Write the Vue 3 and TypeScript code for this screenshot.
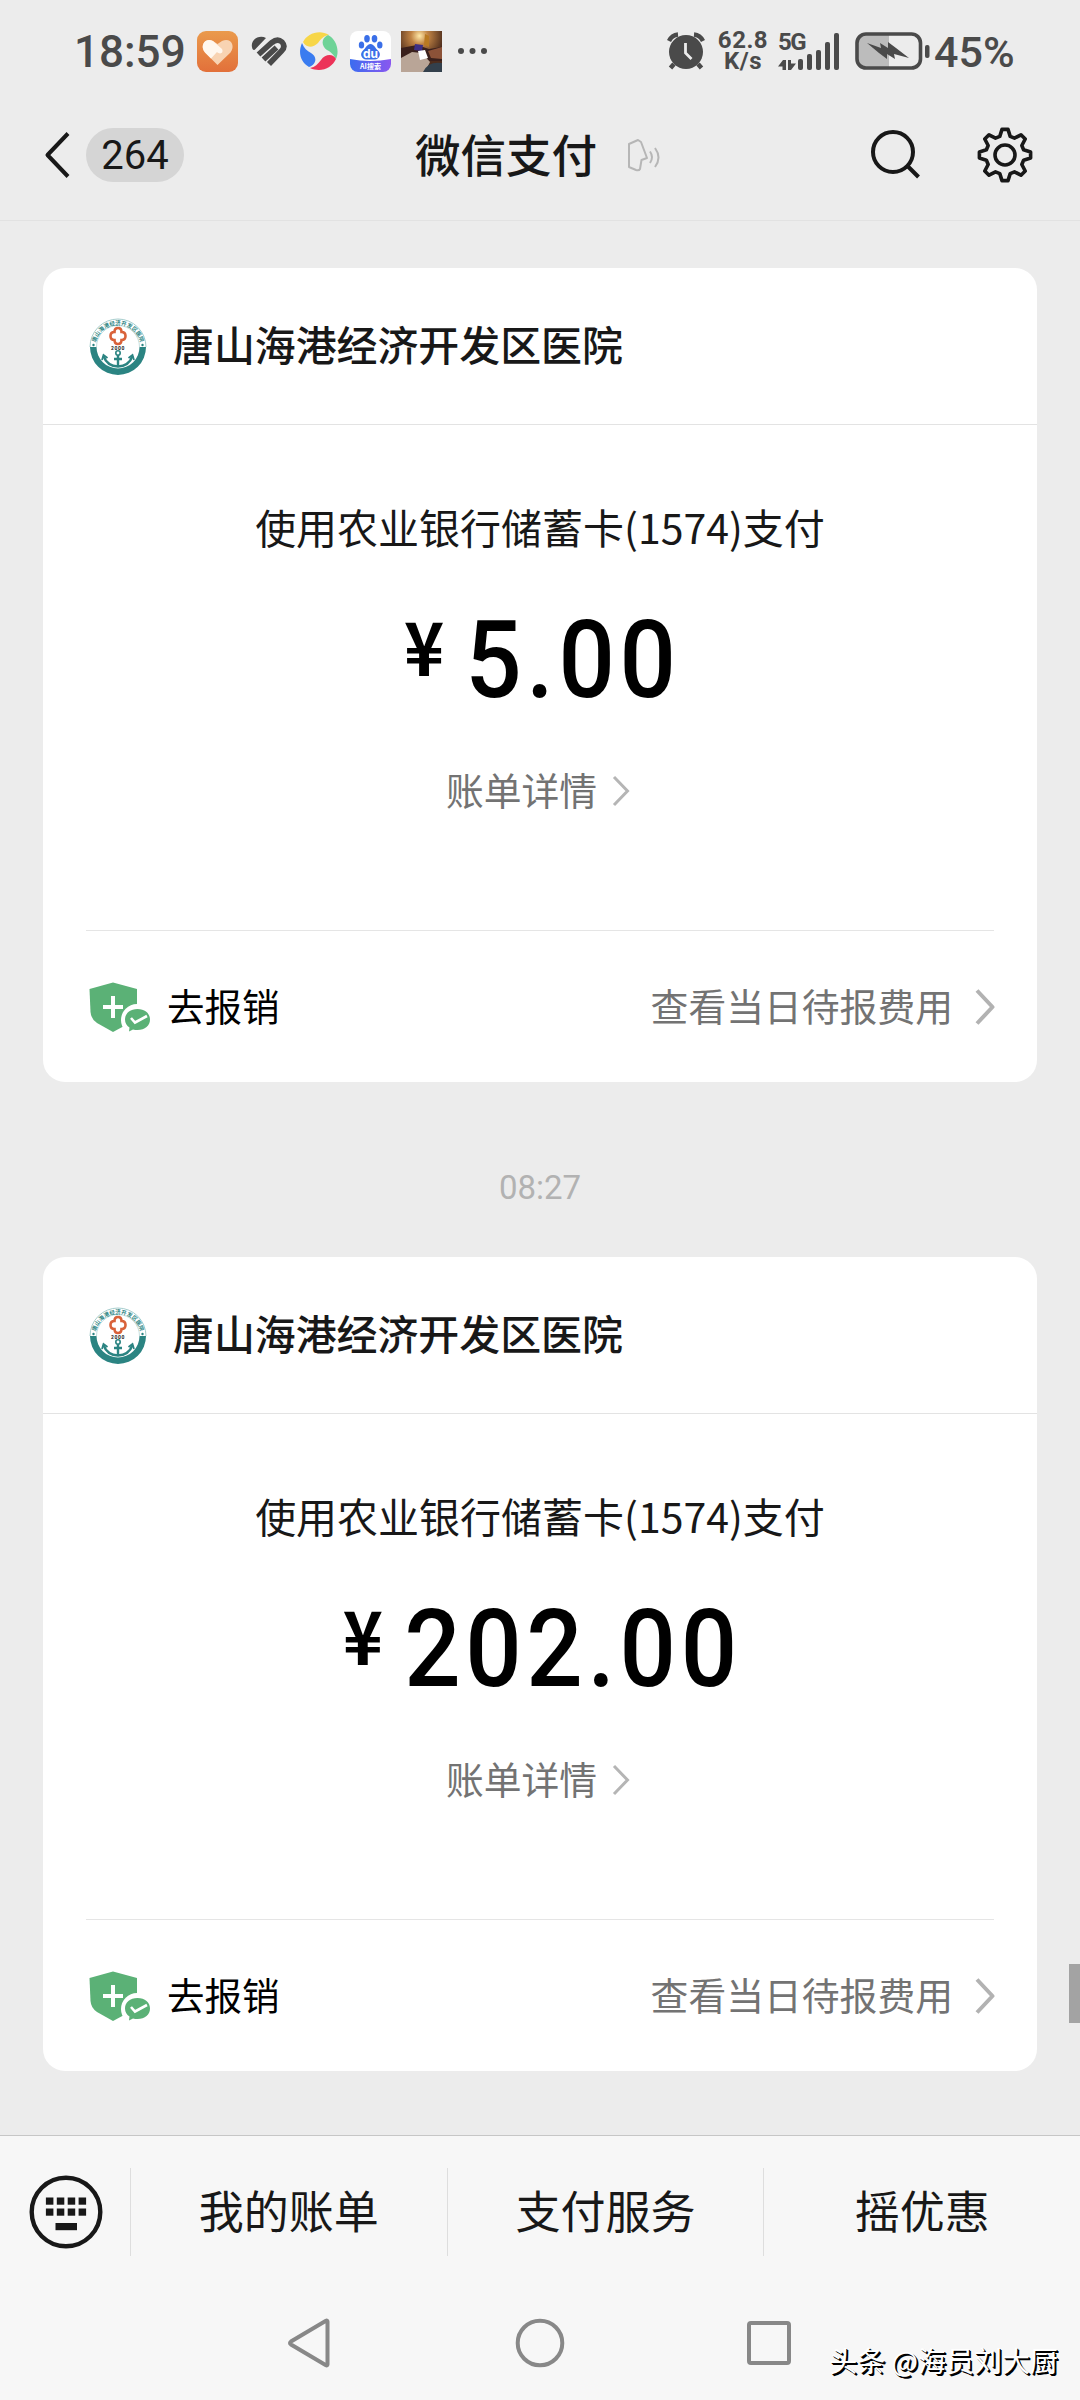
<script setup lang="ts">
import { ref } from 'vue'

interface Bill {
  id: number
  time: string | null
  merchant: string
  method: string
  amount: string
}

const title = ref('微信支付')
const unread = ref(264)

const bills = ref<Bill[]>([
  { id: 1, time: null, merchant: '唐山海港经济开发区医院', method: '使用农业银行储蓄卡(1574)支付', amount: '5.00' },
  { id: 2, time: '08:27', merchant: '唐山海港经济开发区医院', method: '使用农业银行储蓄卡(1574)支付', amount: '202.00' },
])

const menus = ['我的账单', '支付服务', '摇优惠']

// signal bars, low to high
const bars = [11, 16, 20, 28, 37]

// outline of the eight-tooth gear, centred on 0,0
const gearPath = () => {
  const pts: string[] = []
  for (let i = 0; i < 8; i++) {
    const a = (i * Math.PI) / 4
    const tooth = [[-5.2, -18.6], [-3, -25.6], [3, -25.6], [5.2, -18.6]]
    for (const [x, y] of tooth) {
      const px = x * Math.cos(a) - y * Math.sin(a)
      const py = x * Math.sin(a) + y * Math.cos(a)
      pts.push(px.toFixed(2) + ' ' + py.toFixed(2))
    }
  }
  return 'M' + pts.join('L') + 'Z'
}
const gear = gearPath()
</script>

<template>
  <div class="phone">
    <div class="status">
      <span class="clock">18:59</span>
      <div class="apps">
        <svg width="41" height="41" viewBox="0 0 41 41">
          <defs>
            <linearGradient id="og" x1="0" y1="0" x2="0" y2="1">
              <stop offset="0" stop-color="#ea9a4c" />
              <stop offset="1" stop-color="#e2703a" />
            </linearGradient>
          </defs>
          <rect width="41" height="41" rx="9" fill="url(#og)" />
          <path d="M20.500 34L8 21.500C2 14 9 6 16 10L20.500 13L25 10C33 6 39 14 33.500 21.500Z" fill="#f8d3b2" />
          <path d="M20.500 34L8 21.500C2 14 9 6 16 10L25 18C27 22 23 24 20 21L14 27.500Z" fill="#fff7ee" />
        </svg>
        <svg class="keep" width="37" height="31" viewBox="0 0 37 31">
          <path d="M1.500 13C-2 4 8-2 15 2L4.500 13Q3 15 1.500 13Z" fill="#4a4a4a" />
          <path d="M7.500 18.500L21 6.500Q26.500 2 31 6Q35 10.500 30.500 15L18 28M12.500 23.500L25.500 11.500" fill="none" stroke="#4a4a4a" stroke-width="5.600" />
        </svg>
        <svg width="40" height="40" viewBox="0 0 40 40">
          <path d="M4 11C8 3 20-2 30 4C24 5 22 8 19 12C14 17 7 17 4 11Z" fill="#f7d648" />
          <path d="M29 4C37 8 41 19 37 28C34 23 32 21 28 19C22 15 22 7 29 4Z" fill="#6ed397" />
          <path d="M37 28C33 37 22 42 11 37C16 36 19 33 22 29C26 23 34 22 37 28Z" fill="#ec3358" />
          <path d="M10 36C1 31-1 21 3 12C5 17 8 20 12 22C19 26 17 34 10 36Z" fill="#3a7cf0" />
        </svg>
        <svg width="41" height="41" viewBox="0 0 41 41">
          <defs>
            <linearGradient id="bg" x1="0" y1="0" x2="1" y2="0">
              <stop offset="0" stop-color="#3b6cf0" />
              <stop offset="1" stop-color="#8a57ef" />
            </linearGradient>
            <clipPath id="bc"><rect width="41" height="41" rx="8" /></clipPath>
          </defs>
          <g clip-path="url(#bc)">
            <rect width="41" height="41" fill="#fff" />
            <path d="M0 28Q20 32 41 28V41H0Z" fill="url(#bg)" />
          </g>
          <g fill="#3a6fe8">
            <ellipse cx="11.500" cy="14" rx="2.700" ry="3.600" />
            <ellipse cx="17" cy="7.800" rx="2.800" ry="3.700" />
            <ellipse cx="24.500" cy="7.800" rx="2.800" ry="3.700" />
            <ellipse cx="29.800" cy="14" rx="2.700" ry="3.600" />
            <path d="M20.500 13C24 13 25 17 28 19.500C32 23 29 28.500 25 28.500H16C12 28.500 9 23 13 19.500C16 17 17 13 20.500 13Z" />
          </g>
          <text x="20.500" y="26.500" class="du">du</text>
          <text x="20.500" y="38" class="ai">AI搜索</text>
        </svg>
        <svg width="41" height="41" viewBox="0 0 41 41">
          <defs>
            <radialGradient id="pg" cx=".45" cy=".12" r=".6">
              <stop offset="0" stop-color="#ffe9a8" />
              <stop offset=".35" stop-color="#c08344" />
              <stop offset="1" stop-color="#4d2c1c" />
            </radialGradient>
          </defs>
          <rect width="41" height="41" fill="url(#pg)" />
          <path d="M0 17L16 14L28 18L41 16V30H0Z" fill="#3a201c" />
          <path d="M14 13L22 14L21 20L13 19Z" fill="#3c2f86" />
          <path d="M24 3L28 5V16L23 14Z" fill="#b97a22" />
          <path d="M0 27L11 21L21 22L29 31L24 41H0Z" fill="#b9a597" />
          <path d="M17 20L24 19L27 27L19 29Z" fill="#fff" />
          <path d="M27 20L41 16V28L30 27Z" fill="#8c5238" />
          <path d="M22 41Q27 30 41 32V41Z" fill="#33404c" />
        </svg>
        <svg class="more" width="30" height="8" viewBox="0 0 30 8" fill="#4a4a4a">
          <circle cx="4" cy="4" r="3" />
          <circle cx="15.500" cy="4" r="3" />
          <circle cx="27" cy="4" r="3" />
        </svg>
      </div>
      <div class="system">
        <svg width="38" height="38" viewBox="0 0 38 38" fill="none" stroke="#4a4a4a">
          <circle cx="19" cy="20" r="17" fill="#4a4a4a" stroke="none" />
          <path d="M2 9Q5 3 11 2.500M36 9Q33 3 27 2.500" stroke-width="4.500" />
          <path d="M7 32L3.500 36M31 32L34.500 36" stroke-width="4.500" />
          <path d="M18.500 11V21L24.500 27" stroke="#ececec" stroke-width="2.800" />
        </svg>
        <div class="speed">
          <span>62.8</span>
          <span>K/s</span>
        </div>
        <div class="net">
          <span>5G</span>
          <svg width="18" height="10" viewBox="0 0 18 10" fill="#4a4a4a">
            <path d="M0 6.500L5 0H8V10H4.500V6.500Z" />
            <path d="M10 0H13V3.500H18L13 10H10Z" />
          </svg>
        </div>
        <div class="signal">
          <i v-for="h in bars" :key="h" :style="{ height: h + 'px' }"></i>
        </div>
        <svg width="75" height="38" viewBox="0 0 75 38">
          <path d="M34 2H11Q2 2 2 11V27Q2 36 11 36H34Z" fill="#bcbcbc" />
          <rect x="2" y="2" width="63.500" height="34" rx="9" fill="none" stroke="#4a4a4a" stroke-width="3.600" />
          <rect x="70" y="13" width="4.500" height="13" rx="2" fill="#4a4a4a" />
          <path d="M12 11L26 16L25 11L33 16V10L41 16L54 26L39 22L40 27L32 22V27L24 21Z" fill="#4a4a4a" />
        </svg>
        <span class="percent">45%</span>
      </div>
    </div>

    <header class="header">
      <svg class="back" width="26" height="48" viewBox="0 0 26 48" fill="none" stroke="#181818" stroke-width="4">
        <path d="M24 2.500L3.500 24L24 45.500" stroke-linejoin="round" />
      </svg>
      <span class="badge">{{ unread }}</span>
      <h1 class="title">{{ title }}</h1>
      <svg class="ear" width="34" height="34" viewBox="0 0 34 34" fill="none" stroke="#b6b6b6" stroke-width="2" stroke-linejoin="round">
        <path d="M2 6L11 2L14 4L20 20L14.500 22L13 31Q12 33 9 32L2 29Z" />
        <path d="M23 13.500Q27 19 23 25M28 10Q35 19.500 28 29" />
      </svg>
      <svg class="search" width="52" height="52" viewBox="0 0 52 52" fill="none" stroke="#181818" stroke-width="4">
        <circle cx="24" cy="23" r="20" />
        <path d="M38 36.500L49.500 48" />
      </svg>
      <svg class="gear" width="58" height="58" viewBox="-29 -29 58 58" fill="none" stroke="#181818" stroke-width="3.600" stroke-linejoin="round">
        <path :d="gear" />
        <circle r="10" />
      </svg>
    </header>

    <main class="chat">
      <template v-for="bill in bills" :key="bill.id">
        <div v-if="bill.time" class="time">{{ bill.time }}</div>
        <section class="card">
          <div class="card-head">
            <svg width="58" height="58" viewBox="0 0 58 58">
              <defs>
                <path :id="'arc' + bill.id" d="M6 30A23 23 0 0 1 52 30" />
              </defs>
              <path d="M1 29A28 28 0 0 0 57 29H50.500A21.500 21.500 0 0 1 7.500 29Z" fill="#2b8482" />
              <path d="M1 29A28 28 0 0 1 57 29" fill="none" stroke="#8fc0c0" stroke-width=".8" />
              <path d="M7.500 29A21.500 21.500 0 0 1 50.500 29" fill="none" stroke="#b5d5d5" stroke-width=".8" />
              <circle cx="4.500" cy="27" r="1.200" fill="#2b8482" />
              <circle cx="53.500" cy="27" r="1.200" fill="#2b8482" />
              <text class="ring"><textPath :href="'#arc' + bill.id" startOffset="50%">{{ bill.merchant }}</textPath></text>
              <path d="M25.500 14Q25.500 10 29 10T32.500 14Q36.500 14 36.500 18T32.500 22Q32.500 26 29 26T25.500 22Q21.500 22 21.500 18T25.500 14Z" fill="none" stroke="#d9623a" stroke-width="2.600" />
              <text x="29" y="31.500" class="year">2000</text>
              <g fill="none" stroke="#2b8482" stroke-width="2.400">
                <circle cx="29" cy="35" r="2.200" stroke-width="1.600" />
                <path d="M29 37V49M25 41H33" />
                <path d="M14.500 38Q18 48 29 48.500Q40 48 43.500 38" />
                <path d="M13 42L14.500 37L18.500 40M45 42L43.500 37L39.500 40" stroke-width="1.800" />
              </g>
            </svg>
            <span class="merchant">{{ bill.merchant }}</span>
          </div>
          <div class="card-body">
            <p class="method">{{ bill.method }}</p>
            <div class="amount">
              <span class="yen">¥</span>
              <span class="num">{{ bill.amount }}</span>
            </div>
            <div class="detail">
              <span>账单详情</span>
              <svg width="18" height="32" viewBox="0 0 18 32" fill="none" stroke="#b5b5b5" stroke-width="3">
                <path d="M2 2L15.500 16L2 30" />
              </svg>
            </div>
          </div>
          <div class="card-foot">
            <svg width="62" height="50" viewBox="0 0 62 50">
              <path d="M.5 7L24 .5L48 7V25Q47 37 37 43L24 50L8 41Q2 37 1.500 30Z" fill="#5bb176" />
              <path d="M24 14V36M14 25H34" stroke="#fff" stroke-width="4" />
              <circle cx="48" cy="38" r="16" fill="#fff" />
              <path d="M48.500 27C56 27 61 31.500 61 37.500S56 48 48.500 48Q46 48 44 47.500L40 49.500L40.500 45.500Q36 42.500 36 37.500C36 31.500 41 27 48.500 27Z" fill="#5bb176" />
              <path d="M42 36L46 40.500L58 34" fill="none" stroke="#fff" stroke-width="2.600" />
            </svg>
            <span class="claim">去报销</span>
            <span class="fee">查看当日待报费用</span>
            <svg width="20" height="38" viewBox="0 0 20 38" fill="none" stroke="#b2b2b2" stroke-width="4">
              <path d="M2 2.500L17.500 19L2 35.500" stroke-linejoin="round" />
            </svg>
          </div>
        </section>
      </template>
      <div class="scrollbar"></div>
    </main>

    <footer class="menu">
      <div class="keyboard">
        <svg width="74" height="74" viewBox="0 0 74 74" fill="#181818">
          <circle cx="37" cy="37" r="34.300" fill="none" stroke="#181818" stroke-width="4.400" />
          <template v-for="c in 4" :key="c">
            <rect :x="6 + c * 10.9" y="22.500" width="7.500" height="7.200" />
            <rect :x="6 + c * 10.9" y="33.500" width="7.500" height="7.200" />
          </template>
          <rect x="26.500" y="48" width="21.500" height="7.200" />
        </svg>
      </div>
      <div v-for="m in menus" :key="m" class="menu-item">{{ m }}</div>
    </footer>

    <nav class="nav">
      <svg width="50" height="50" viewBox="0 0 50 50"><path d="M42.500 3.500V46.500Q42.500 48 40.500 47L6 26.500Q4 25 6 23.500L40.500 3Q42.500 2 42.500 3.500Z" /></svg>
      <svg width="50" height="50" viewBox="0 0 50 50"><circle cx="25" cy="25" r="22.300" /></svg>
      <svg width="50" height="50" viewBox="0 0 50 50"><rect x="4" y="5" width="40" height="40" rx="2" /></svg>
    </nav>
    <div class="watermark">头条 @海员刘大厨</div>
  </div>
</template>

<style>
body {
  margin: 0;
  background: #ececec;
}
</style>

<style scoped>
.phone {
  position: relative;
  display: flex;
  flex-direction: column;
  width: 1080px;
  height: 2400px;
  overflow: hidden;
  background: #ececec;
  color: #181818;
  font-family: "Noto Sans CJK SC", "Noto Sans", sans-serif;
}

svg {
  display: block;
  flex: none;
}

/* 状态栏 */
.status {
  display: flex;
  align-items: center;
  height: 102px;
  color: #4a4a4a;
}
.clock {
  width: 123px;
  padding: 2px 0 0 74px;
  font-family: Roboto, sans-serif;
  font-size: 44px;
  font-weight: 500;
  line-height: 60px;
}
.apps {
  display: flex;
  align-items: center;
  gap: 10.500px;
}
.keep {
  margin: 0 1px 0 2px;
}
.more {
  margin-left: 4px;
}
.system {
  display: flex;
  align-items: center;
  margin-left: auto;
  padding-right: 66px;
}
.speed {
  display: flex;
  flex-direction: column;
  align-items: center;
  width: 54px;
  margin-left: 11px;
  font-family: Roboto, sans-serif;
  font-size: 24px;
  font-weight: 700;
  line-height: 21px;
  letter-spacing: .5px;
}
.net {
  display: flex;
  flex-direction: column;
  justify-content: space-between;
  height: 38px;
  width: 20px;
  margin-left: 8px;
  font-family: Roboto, sans-serif;
  font-size: 24px;
  font-weight: 700;
  line-height: 20px;
  letter-spacing: -1.500px;
  white-space: nowrap;
}
.signal {
  display: flex;
  align-items: flex-end;
  gap: 4px;
  height: 37px;
}
.signal i {
  width: 5px;
  border-radius: 2px;
  background: #4a4a4a;
}
.signal + svg {
  margin-left: 16px;
}
.percent {
  width: 80px;
  margin-left: 4px;
  padding-top: 2px;
  font-family: Roboto, sans-serif;
  font-size: 43px;
  font-weight: 500;
  line-height: 60px;
  white-space: nowrap;
}
.du {
  fill: #fff;
  font: 700 12px Inter, sans-serif;
  text-anchor: middle;
}
.ai {
  fill: #fff;
  font: 700 7px "Noto Sans CJK SC", sans-serif;
  text-anchor: middle;
}

/* 标题栏 */
.header {
  display: flex;
  align-items: center;
  box-sizing: border-box;
  height: 119px;
  padding: 0 46px 12px 44px;
  border-bottom: 1px solid #e2e2e2;
}
.badge {
  width: 98px;
  height: 54px;
  margin-left: 16px;
  border-radius: 27px;
  background: #d5d5d5;
  font-family: Roboto, sans-serif;
  font-size: 40px;
  line-height: 55px;
  text-align: center;
}
.title {
  margin: 0 0 5px 231px;
  font-size: 45.500px;
  font-weight: 500;
  line-height: 60px;
}
.ear {
  margin-left: 30px;
}
.search {
  margin-left: auto;
}
.gear {
  margin-left: 55px;
}

/* 消息 */
.chat {
  position: relative;
  height: 1914px;
  box-sizing: border-box;
  padding: 47px 43px 0;
}
.time {
  height: 175px;
  box-sizing: border-box;
  padding-top: 82px;
  color: #b2b2b2;
  font-family: Roboto, sans-serif;
  font-size: 33px;
  line-height: 48px;
  text-align: center;
}
.card {
  height: 814px;
  border-radius: 22px;
  background: #fff;
}
.card-head {
  display: flex;
  align-items: center;
  height: 156px;
  padding-left: 46px;
  border-bottom: 1px solid #e3e3e3;
}
.card-head svg {
  margin-top: 2px;
}
.merchant {
  margin: 0 0 4px 26px;
  font-size: 40.900px;
  font-weight: 500;
  line-height: 60px;
}
.card-body {
  height: 506px;
  box-sizing: border-box;
  padding-top: 71px;
  margin: 0 43px;
  border-bottom: 1px solid #e5e5e5;
}
.method {
  margin: 0;
  font-size: 41px;
  line-height: 60px;
  text-align: center;
}
/* narrow figures, both symbol and number */
.amount {
  display: flex;
  justify-content: center;
  align-items: flex-start;
  height: 108px;
  margin-top: 50px;
  color: #000;
  transform: scaleX(.92);
}
.yen {
  margin: 1px 23px 0 0;
  font-size: 74px;
  font-weight: 700;
  line-height: 74px;
}
.num {
  margin-right: -5px;
  font-family: Roboto, sans-serif;
  font-size: 108px;
  font-weight: 500;
  letter-spacing: 5px;
  line-height: 108px;
}
.detail {
  display: flex;
  justify-content: center;
  align-items: center;
  gap: 15px;
  height: 50px;
  margin: 50px 4px 0 0;
  color: #737373;
  font-size: 37.800px;
  line-height: 50px;
}
.detail svg {
  margin-top: 3px;
}
.card-foot {
  display: flex;
  align-items: center;
  height: 151px;
  padding: 0 42px 0 46px;
}
.claim {
  margin: 0 0 3px 16px;
  color: #000;
  font-size: 37.500px;
  line-height: 56px;
}
.fee {
  margin: 0 22px 3px auto;
  color: #737373;
  font-size: 37.800px;
  line-height: 56px;
}
.scrollbar {
  position: absolute;
  right: 0;
  top: 1743px;
  width: 11px;
  height: 59px;
  background: #a3a3a3;
}
.ring {
  fill: #2b8482;
  font-size: 5.500px;
  font-weight: 700;
  text-anchor: middle;
}
.year {
  fill: #222;
  font: 700 5px Roboto, sans-serif;
  letter-spacing: .6px;
  text-anchor: middle;
}

/* 底部菜单 */
.menu {
  display: flex;
  align-items: center;
  height: 152px;
  border-top: 1px solid #c6c6c6;
  background: #f7f7f7;
}
.keyboard {
  width: 101px;
  padding-left: 29px;
}
.menu-item {
  flex: 1;
  height: 88px;
  border-left: 1px solid #dedede;
  font-size: 45px;
  line-height: 83px;
  text-align: center;
}

.nav {
  display: flex;
  justify-content: center;
  gap: 180px;
  flex: 1;
  box-sizing: border-box;
  padding-top: 30px;
  background: #f7f7f7;
}
.nav svg {
  fill: none;
  stroke: #888;
  stroke-width: 4;
}
.watermark {
  position: absolute;
  right: 22px;
  bottom: 20px;
  color: #fff;
  font-size: 28px;
  line-height: 40px;
  text-shadow: 1px 1px 0 #000, 2px 2px 0 #000;
}
</style>
